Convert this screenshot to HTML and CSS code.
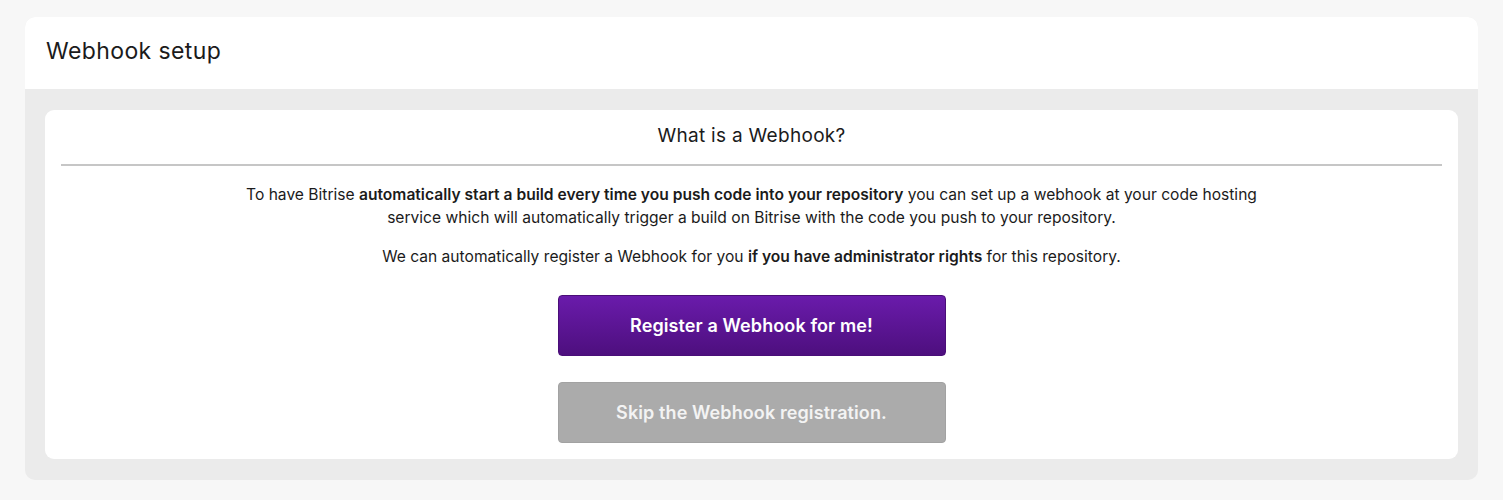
FILE: index.html
```html
<!DOCTYPE html>
<html>
<head>
<meta charset="utf-8">
<link rel="stylesheet" href="styles.css">
</head>
<body>
<div class="page">
  <section class="panel">
    <header class="panel-header">Webhook setup</header>
    <div class="panel-body">
      <div class="card">
        <h2 class="card-title">What is a Webhook?</h2>
        <div class="card-content">
          <p class="text">To have Bitrise <b>automatically start a build every time you push code into your repository</b> you can set up a webhook at your code hosting<br>service which will automatically trigger a build on Bitrise with the code you push to your repository.</p>
          <p class="text">We can automatically register a Webhook for you <b>if you have administrator rights</b> for this repository.</p>
          <div class="actions">
            <button class="btn btn-primary">Register a Webhook for me!</button>
            <button class="btn btn-secondary">Skip the Webhook registration.</button>
          </div>
        </div>
      </div>
    </div>
  </section>
</div>
</body>
</html>
```
FILE: styles.css
```css
html, body {
  margin: 0;
  padding: 0;
  background: #f7f7f7;
  font-family: Inter, "Open Sans", sans-serif;
  color: #1b1b1b;
}
.page {
  padding: 17px 25px 20px 25px;
}
.panel {
  border-radius: 10px;
  overflow: hidden;
  background: #ebebeb;
}
.panel-header {
  background: #fff;
  height: 72px;
  box-sizing: border-box;
  padding: 0 21px 4px 21px;
  display: flex;
  align-items: center;
  font-size: 23px;
  letter-spacing: 0.4px;
  font-weight: 400;
}
.panel-body {
  padding: 21px 20px 21px 20px;
}
.card {
  background: #fff;
  border-radius: 9px;
  padding: 0 16px 16px 16px;
}
.card-title {
  margin: 0;
  height: 56px;
  box-sizing: border-box;
  border-bottom: 2px solid #c6c6c6;
  display: flex;
  align-items: center;
  justify-content: center;
  font-size: 19px;
  letter-spacing: 0.3px;
  font-weight: 400;
  padding-bottom: 4px;
}
.card-content {
  display: flex;
  flex-direction: column;
  align-items: center;
  padding-top: 17px;
}
.text {
  margin: 0 0 16px 0;
  font-size: 15.6px;
  line-height: 23px;
  text-align: center;
}
.text b {
  font-weight: 600;
}
.actions {
  display: flex;
  flex-direction: column;
  gap: 26px;
  margin-top: 11px;
}
.btn {
  width: 388px;
  height: 61px;
  border-radius: 4px;
  font-family: Inter, "Open Sans", sans-serif;
  font-size: 18px;
  letter-spacing: 0.1px;
  font-weight: 600;
  color: #fff;
  border: 1px solid transparent;
  cursor: pointer;
}
.btn-primary {
  background: linear-gradient(#6a1bab, #4d0f7e);
  border-color: #4a0e78;
}
.btn-secondary {
  background: #ababab;
  border-color: #a2a2a2;
  color: #f3f3f3;
}
```
